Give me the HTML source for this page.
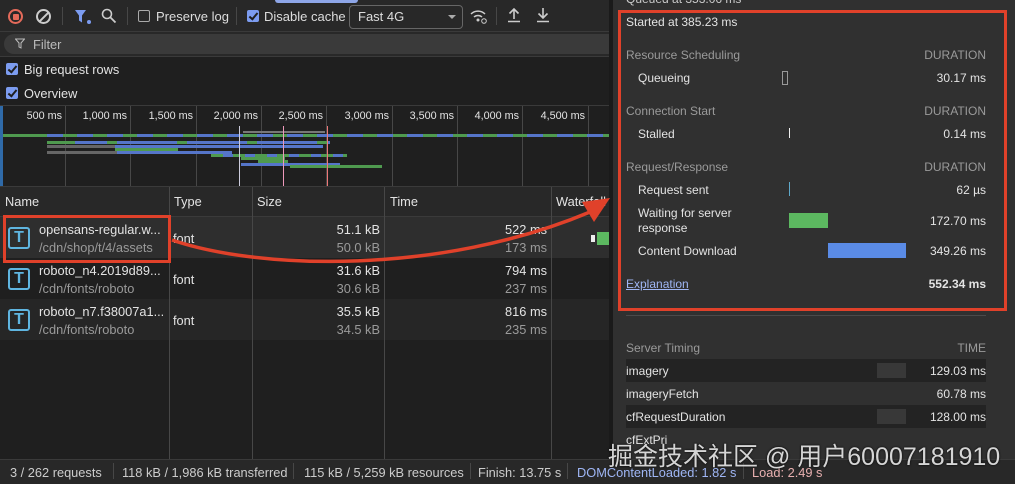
<!DOCTYPE html>
<html><head><meta charset="utf-8"><style>
*{margin:0;padding:0;box-sizing:border-box}
body{width:1015px;height:484px;overflow:hidden;background:#1f1f1f;font-family:"Liberation Sans","Noto Sans CJK SC",sans-serif;font-size:12px;color:#e3e3e3;position:relative}
.a{position:absolute;white-space:nowrap}
.g{color:#9a9a9a}
.t{font-size:12.8px}
.cb{position:absolute;width:12px;height:12px;border-radius:2px;background:#7c9cf0}
.cb:after{content:"";position:absolute;left:4px;top:1px;width:3px;height:7px;border:solid #1f1f1f;border-width:0 2px 2px 0;transform:rotate(40deg)}
.vl{position:absolute;width:1px;background:#474747}
.bar{position:absolute;height:3px}
.ic{position:absolute;left:8px;width:22px;height:22px;border:2px solid #5fb5e0;border-radius:3px;color:#5fb5e0;font-weight:bold;font-size:16px;text-align:center;line-height:18px}
.r{text-align:right}
.ol{position:absolute;top:106px;height:80px;width:1px;background:#474747}
.olb{position:absolute;top:110px;width:60px;text-align:right;font-size:10.8px}
</style></head><body>
<!-- toolbar -->
<div class="a" style="left:0;top:0;width:610px;height:32px;background:#282828;border-bottom:1px solid #3a3a3a"></div>
<div class="a" style="left:275px;top:0;width:83px;height:3px;background:#8ea6e8;border-radius:0 0 4px 4px"></div>
<div class="a" style="left:8px;top:9px;width:15px;height:15px;border:2px solid #e46a5a;border-radius:50%"><div style="position:absolute;left:2.5px;top:2.5px;width:6px;height:6px;background:#e46a5a;border-radius:1px"></div></div>
<div class="a" style="left:36px;top:9px;width:15px;height:15px;border:2px solid #ccc;border-radius:50%"><div style="position:absolute;left:4.5px;top:-1px;width:2px;height:14px;background:#ccc;transform:rotate(45deg)"></div></div>
<div class="vl" style="left:62px;top:7px;height:18px"></div>
<svg class="a" style="left:74px;top:9px" width="20" height="16"><path d="M1 1h11l-4 5.5v7l-3-2v-5z" fill="#7c9cf0"/><circle cx="15" cy="13" r="2" fill="#7c9cf0"/></svg>
<svg class="a" style="left:101px;top:8px" width="16" height="16"><circle cx="6" cy="6" r="4.5" stroke="#ccc" stroke-width="1.6" fill="none"/><path d="M9.5 9.5l5 5" stroke="#ccc" stroke-width="1.8"/></svg>
<div class="vl" style="left:127px;top:7px;height:18px"></div>
<div class="a" style="left:138px;top:10px;width:12px;height:12px;border:1px solid #aaa;border-radius:2px"></div>
<div class="a" style="left:156px;top:9px;font-size:13px;color:#ddd">Preserve log</div>
<div class="vl" style="left:236px;top:7px;height:18px"></div>
<div class="cb" style="left:247px;top:10px"></div>
<div class="a" style="left:264px;top:9px;font-size:13px;color:#ddd">Disable cache</div>
<div class="a" style="left:349px;top:5px;width:114px;height:24px;border:1px solid #666;border-radius:4px"></div>
<div class="a" style="left:358px;top:9px;font-size:13px;color:#ddd">Fast 4G</div>
<div class="a" style="left:448px;top:15px;border:4px solid transparent;border-top-color:#aaa"></div>
<svg class="a" style="left:470px;top:8px" width="18" height="16"><path d="M1 6a10 10 0 0 1 14 0M4 9a6 6 0 0 1 8 0" stroke="#ccc" stroke-width="1.5" fill="none"/><circle cx="8" cy="12" r="1.5" fill="#ccc"/><circle cx="14" cy="13" r="2.3" stroke="#ccc" fill="none"/></svg>
<div class="vl" style="left:496px;top:7px;height:18px"></div>
<svg class="a" style="left:506px;top:7px" width="16" height="16"><path d="M8 12V2M3.5 6.5L8 2l4.5 4.5M2 14.5h12" stroke="#ccc" stroke-width="1.6" fill="none"/></svg>
<svg class="a" style="left:535px;top:7px" width="16" height="16"><path d="M8 1v10M3.5 6.5L8 11l4.5-4.5M2 14.5h12" stroke="#ccc" stroke-width="1.6" fill="none"/></svg>
<!-- filter -->
<div class="a" style="left:0;top:32px;width:610px;height:25px;background:#282828;border-bottom:1px solid #3a3a3a"></div>
<div class="a" style="left:4px;top:34px;width:610px;height:20px;background:#3a3a3a;border-radius:10px 0 0 10px"></div>
<svg class="a" style="left:15px;top:38px" width="10" height="11"><path d="M0.5 1h9l-3.5 4v5l-2-1v-4z" stroke="#bbb" fill="none"/></svg>
<div class="a" style="left:33px;top:37px;color:#bbb;font-size:12.8px">Filter</div>
<div class="cb" style="left:6px;top:63px"></div>
<div class="a" style="left:24px;top:62px;font-size:12.8px">Big request rows</div>
<div class="cb" style="left:6px;top:87px"></div>
<div class="a" style="left:24px;top:86px;font-size:12.8px">Overview</div>
<!-- overview -->
<div class="a" style="left:0;top:105px;width:610px;height:1px;background:#3a3a3a"></div>
<div class="a" style="left:0;top:106px;width:3px;height:80px;background:#2f6aa8"></div>
<div class="ol" style="left:65px"></div><div class="ol" style="left:130px"></div><div class="ol" style="left:196px"></div><div class="ol" style="left:261px"></div><div class="ol" style="left:326px"></div><div class="ol" style="left:392px"></div><div class="ol" style="left:457px"></div><div class="ol" style="left:522px"></div><div class="ol" style="left:588px"></div>
<div class="olb" style="left:2px">500 ms</div>
<div class="olb" style="left:67px">1,000 ms</div>
<div class="olb" style="left:133px">1,500 ms</div>
<div class="olb" style="left:198px">2,000 ms</div>
<div class="olb" style="left:263px">2,500 ms</div>
<div class="olb" style="left:329px">3,000 ms</div>
<div class="olb" style="left:394px">3,500 ms</div>
<div class="olb" style="left:459px">4,000 ms</div>
<div class="olb" style="left:525px">4,500 ms</div>
<div class="bar" style="left:3px;top:134px;width:607px;background:repeating-linear-gradient(90deg,#4f9a4f 0 14px,#5575c9 14px 30px)"></div>
<div class="bar" style="left:3px;top:134px;width:38px;background:#4f9a4f"></div>
<div class="bar" style="left:47px;top:141px;width:283px;background:repeating-linear-gradient(90deg,#5575c9 0 60px,#4f9a4f 60px 70px)"></div>
<div class="bar" style="left:47px;top:141px;width:28px;background:#4f9a4f"></div>
<div class="bar" style="left:47px;top:145px;width:276px;background:#5575c9"></div>
<div class="bar" style="left:47px;top:145px;width:68px;background:#666"></div>
<div class="bar" style="left:115px;top:148px;width:63px;background:#4f9a4f"></div>
<div class="bar" style="left:47px;top:151px;width:185px;background:#5575c9"></div>
<div class="bar" style="left:47px;top:151px;width:70px;background:#666"></div>
<div class="bar" style="left:211px;top:154px;width:136px;background:repeating-linear-gradient(90deg,#4f9a4f 0 12px,#5575c9 12px 22px)"></div>
<div class="bar" style="left:241px;top:157px;width:44px;background:#4f9a4f"></div>
<div class="bar" style="left:258px;top:160px;width:30px;background:#4f9a4f"></div>
<div class="bar" style="left:241px;top:163px;width:99px;background:#5575c9"></div>
<div class="bar" style="left:290px;top:165px;width:92px;background:#4f9a4f"></div>
<div class="a" style="left:243px;top:131px;width:82px;height:2px;background:#777"></div>
<div class="a" style="left:239px;top:126px;width:1px;height:60px;background:#ccd"></div>
<div class="a" style="left:283px;top:126px;width:1px;height:60px;background:#e9b"></div>
<div class="a" style="left:327px;top:126px;width:1px;height:60px;background:#e77"></div>
<!-- table -->
<div class="a" style="left:0;top:186px;width:610px;height:31px;background:#282828;border-top:1px solid #3a3a3a;border-bottom:1px solid #3a3a3a"></div>
<div class="a" style="left:0;top:217px;width:610px;height:41px;background:#2e2e2e"></div>
<div class="a" style="left:0;top:299px;width:610px;height:41px;background:#262626"></div>
<div class="vl" style="left:169px;top:187px;height:272px"></div><div class="vl" style="left:252px;top:187px;height:272px"></div><div class="vl" style="left:384px;top:187px;height:272px"></div><div class="vl" style="left:551px;top:187px;height:272px"></div>
<div class="a t" style="left:5px;top:194px">Name</div><div class="a t" style="left:174px;top:194px">Type</div><div class="a t" style="left:257px;top:194px">Size</div><div class="a t" style="left:390px;top:194px">Time</div><div class="a t" style="left:556px;top:194px">Waterfall</div>
<div class="ic" style="top:227px">T</div><div class="ic" style="top:268px">T</div><div class="ic" style="top:309px">T</div>
<div class="a t" style="left:39px;top:222px">opensans-regular.w...</div><div class="a g t" style="left:39px;top:240px">/cdn/shop/t/4/assets</div>
<div class="a t" style="left:39px;top:263px">roboto_n4.2019d89...</div><div class="a g t" style="left:39px;top:281px">/cdn/fonts/roboto</div>
<div class="a t" style="left:39px;top:304px">roboto_n7.f38007a1...</div><div class="a g t" style="left:39px;top:322px">/cdn/fonts/roboto</div>
<div class="a t" style="left:173px;top:231px">font</div><div class="a t" style="left:173px;top:272px">font</div><div class="a t" style="left:173px;top:313px">font</div>
<div class="a r t" style="left:260px;top:222px;width:120px">51.1 kB</div><div class="a r g t" style="left:260px;top:240px;width:120px">50.0 kB</div>
<div class="a r t" style="left:260px;top:263px;width:120px">31.6 kB</div><div class="a r g t" style="left:260px;top:281px;width:120px">30.6 kB</div>
<div class="a r t" style="left:260px;top:304px;width:120px">35.5 kB</div><div class="a r g t" style="left:260px;top:322px;width:120px">34.5 kB</div>
<div class="a r t" style="left:400px;top:222px;width:147px">522 ms</div><div class="a r g t" style="left:400px;top:240px;width:147px">173 ms</div>
<div class="a r t" style="left:400px;top:263px;width:147px">794 ms</div><div class="a r g t" style="left:400px;top:281px;width:147px">237 ms</div>
<div class="a r t" style="left:400px;top:304px;width:147px">816 ms</div><div class="a r g t" style="left:400px;top:322px;width:147px">235 ms</div>
<div class="a" style="left:591px;top:235px;width:4px;height:7px;background:#eee"></div>
<div class="a" style="left:597px;top:232px;width:13px;height:13px;background:#5cb860"></div>
<!-- right panel -->
<div class="a" style="left:609px;top:0;width:4px;height:459px;background:#1a1a1a"></div>
<div class="a" style="left:613px;top:0;width:402px;height:459px;background:#303030"></div>
<div class="a" style="left:626px;top:-8px;color:#ccc">Queued at 353.06 ms</div>
<div class="a" style="left:618px;top:10px;width:389px;height:301px;border:3px solid #e0412a"></div>
<div class="a" style="left:626px;top:15px">Started at 385.23 ms</div>
<div class="a g" style="left:626px;top:48px">Resource Scheduling</div><div class="a g r" style="left:900px;top:48px;width:86px">DURATION</div>
<div class="a" style="left:638px;top:71px">Queueing</div><div class="a" style="left:782px;top:71px;width:6px;height:14px;border:1px solid #999"></div><div class="a r" style="left:880px;top:71px;width:106px">30.17 ms</div>
<div class="a g" style="left:626px;top:104px">Connection Start</div><div class="a g r" style="left:900px;top:104px;width:86px">DURATION</div>
<div class="a" style="left:638px;top:127px">Stalled</div><div class="a" style="left:789px;top:128px;width:1px;height:10px;background:#eee"></div><div class="a r" style="left:880px;top:127px;width:106px">0.14 ms</div>
<div class="a g" style="left:626px;top:160px">Request/Response</div><div class="a g r" style="left:900px;top:160px;width:86px">DURATION</div>
<div class="a" style="left:638px;top:183px">Request sent</div><div class="a" style="left:789px;top:182px;width:1px;height:14px;background:#5fa8c9"></div><div class="a r" style="left:880px;top:183px;width:106px">62 µs</div>
<div class="a" style="left:638px;top:206px;line-height:15px">Waiting for server<br>response</div><div class="a" style="left:789px;top:213px;width:39px;height:15px;background:#5cb860"></div><div class="a r" style="left:880px;top:214px;width:106px">172.70 ms</div>
<div class="a" style="left:638px;top:244px">Content Download</div><div class="a" style="left:828px;top:243px;width:78px;height:15px;background:#5a8be6"></div><div class="a r" style="left:880px;top:244px;width:106px">349.26 ms</div>
<div class="a" style="left:626px;top:277px;color:#9fb6f5;text-decoration:underline">Explanation</div><div class="a r" style="left:880px;top:277px;width:106px;font-weight:bold">552.34 ms</div>
<div class="a" style="left:626px;top:315px;width:360px;height:1px;background:#4a4a4a"></div>
<div class="a g" style="left:626px;top:341px">Server Timing</div><div class="a g r" style="left:900px;top:341px;width:86px">TIME</div>
<div class="a" style="left:626px;top:359px;width:360px;height:23px;background:#232323"></div>
<div class="a" style="left:626px;top:405px;width:360px;height:23px;background:#232323"></div>
<div class="a" style="left:877px;top:363px;width:29px;height:15px;background:#383838"></div>
<div class="a" style="left:877px;top:409px;width:29px;height:15px;background:#383838"></div>
<div class="a" style="left:626px;top:364px">imagery</div><div class="a r" style="left:880px;top:364px;width:106px">129.03 ms</div>
<div class="a" style="left:626px;top:387px">imageryFetch</div><div class="a r" style="left:880px;top:387px;width:106px">60.78 ms</div>
<div class="a" style="left:626px;top:410px">cfRequestDuration</div><div class="a r" style="left:880px;top:410px;width:106px">128.00 ms</div>
<div class="a" style="left:626px;top:433px">cfExtPri</div>
<!-- status bar -->
<div class="a" style="left:0;top:459px;width:1015px;height:25px;background:#282828;border-top:1px solid #3a3a3a"></div>
<div class="a t" style="left:10px;top:465px;color:#ccc">3 / 262 requests</div>
<div class="vl" style="left:113px;top:463px;height:16px"></div>
<div class="a t" style="left:122px;top:465px;color:#ccc">118 kB / 1,986 kB transferred</div>
<div class="vl" style="left:293px;top:463px;height:16px"></div>
<div class="a t" style="left:304px;top:465px;color:#ccc">115 kB / 5,259 kB resources</div>
<div class="vl" style="left:470px;top:463px;height:16px"></div>
<div class="a t" style="left:478px;top:465px;color:#ccc">Finish: 13.75 s</div>
<div class="vl" style="left:567px;top:463px;height:16px"></div>
<div class="a t" style="left:577px;top:465px;color:#9fb6f5">DOMContentLoaded: 1.82 s</div>
<div class="vl" style="left:743px;top:463px;height:16px"></div>
<div class="a t" style="left:752px;top:465px;color:#e8b0b0">Load: 2.49 s</div>
<!-- watermark -->
<div class="a" style="left:608px;top:437px;font-size:25px;color:rgba(235,235,235,0.9);text-shadow:0 0 2px #000">掘金技术社区 @ 用户60007181910</div>
<!-- left red box + arrow -->
<div class="a" style="left:3px;top:215px;width:168px;height:48px;border:3px solid #e0412a"></div>
<svg class="a" style="left:0;top:0" width="620" height="300"><path d="M172 240C260 270 440 275 590 212" stroke="#e0412a" stroke-width="3.5" fill="none"/><path d="M610 198L582 202L594 222Z" fill="#e0412a"/></svg>
</body></html>
